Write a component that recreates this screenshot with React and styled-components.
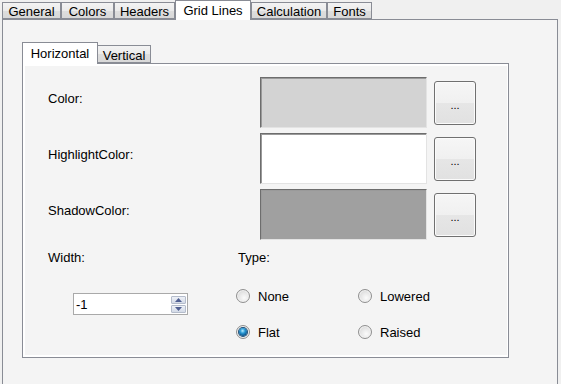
import React from 'react'
import styled, { createGlobalStyle } from 'styled-components'

const GlobalStyle = createGlobalStyle`
	html, body {
		margin: 0;
		padding: 0;
		background: #f0f0f0;
	}
	body {
		font: 13px 'Liberation Sans', Arial, sans-serif;
		color: #000;
	}
`

const Window = styled.div`
	width: 561px;
	height: 384px;
	overflow: hidden;
	padding-left: 2px;
	box-sizing: border-box;
`

const TabStrip = styled.div`
	display: flex;
	align-items: flex-end;
	height: ${p => p.$height}px;
`

const Tab = styled.div`
	position: relative;
	box-sizing: border-box;
	width: ${p => p.$width}px;
	height: ${p => (p.$active ? p.$tall : p.$short)}px;
	margin-bottom: ${p => (p.$active ? -1 : 0)}px;
	margin-left: ${p => p.$shift || 0}px;
	z-index: ${p => (p.$active ? 2 : 1)};
	border: 1px solid #898c95;
	border-bottom: ${p => (p.$active ? 'none' : '1px solid #898c95')};
	background: ${p =>
		p.$active
			? '#ffffff'
			: 'linear-gradient(#f3f3f3 0%, #ebebeb 50%, #dedede 51%, #d8d8d8 100%)'};
	display: flex;
	justify-content: center;
	align-items: center;
	padding-top: ${p => p.$pad || 0}px;
	line-height: 15px;
	white-space: nowrap;
`

const Page = styled.div`
	box-sizing: border-box;
	width: 556px;
	height: 380px;
	border: 1px solid #898c95;
	background: #f4f4f4;
	padding: 22px 0 0 19px;
`

const InnerTabs = styled.div`
	width: 487px;
`

const InnerPanel = styled.div`
	box-sizing: border-box;
	height: 295px;
	border: 1px solid #898c95;
	background: #ffffff;
	padding: 2px 1px 2px 2px;
`

const Content = styled.div`
	height: 100%;
	background: #f4f4f4;
	padding: 11px 0 0 23px;
	box-sizing: border-box;
`

const ColorRows = styled.div`
	display: flex;
	flex-direction: column;
	gap: 5px;
`

const ColorRow = styled.div`
	display: flex;
	align-items: flex-start;
	height: 51px;
`

const Label = styled.div`
	width: ${p => p.$width || 'auto'};
	margin-top: ${p => p.$top || 0}px;
	padding-left: ${p => p.$left || 0}px;
	line-height: 15px;
`

const Swatch = styled.div`
	box-sizing: border-box;
	width: 167px;
	height: 51px;
	background: ${p => p.$color};
	border: 1px solid;
	border-color: #6d6d6d #e3e3e3 #e3e3e3 #6d6d6d;
	box-shadow: inset 1px 1px 0 #9a9a9a;
`

const PickButton = styled.button`
	box-sizing: border-box;
	width: 42px;
	height: 44px;
	margin: 4px 0 0 7px;
	padding: 4px 0 0;
	border: 1px solid #707070;
	border-radius: 3px;
	background: linear-gradient(#f6f6f6 0%, #f0f0f0 50%, #e6e6e6 51%, #e1e1e1 100%);
	box-shadow: inset 0 0 0 1px #fbfbfb;
	font: 11px 'Liberation Sans', Arial, sans-serif;
	color: #000;
	letter-spacing: 0;
`

const Bottom = styled.div`
	display: grid;
	grid-template-columns: 188px 1fr;
	margin-top: 10px;
`

const SpinBox = styled.div`
	box-sizing: border-box;
	display: flex;
	align-items: center;
	justify-content: space-between;
	width: 115px;
	height: 22px;
	margin: 28px 0 0 25px;
	padding: 0 1px 0 2px;
	border: 1px solid #a9a9a9;
	background: #ffffff;
`

const SpinButtons = styled.div`
	display: flex;
	flex-direction: column;
	gap: 1px;
`

const SpinButton = styled.div`
	box-sizing: border-box;
	width: 15px;
	height: 8px;
	border: 1px solid #b4bccb;
	border-radius: 1px;
	background: linear-gradient(#eef1f7, #d3dae7);
	display: flex;
	align-items: center;
	justify-content: center;
`

const RadioGrid = styled.div`
	display: grid;
	grid-template-columns: 122px 1fr;
	grid-auto-rows: 20px;
	row-gap: 16px;
	margin-top: 21px;
`

const RadioItem = styled.label`
	display: flex;
	align-items: center;
	gap: 8px;
	line-height: 15px;
`

const RadioCircle = styled.span`
	position: relative;
	box-sizing: border-box;
	width: 14px;
	height: 14px;
	border-radius: 50%;
	border: 1px solid #8f8f8f;
	background: radial-gradient(circle at 60% 65%, #fbfbfb 0%, #e8e8e8 45%, #cfcfcf 100%);
	box-shadow: inset 0 0 0 1px #f2f2f2;
	display: flex;
	align-items: center;
	justify-content: center;

	&::after {
		content: '';
		display: ${p => (p.$checked ? 'block' : 'none')};
		width: 8px;
		height: 8px;
		border-radius: 50%;
		background: radial-gradient(circle at 45% 35%, #b8ecff 0%, #2a9ad6 35%, #0e5a92 70%, #08355a 100%);
		box-shadow: 0 0 0 1px #1d4f78;
	}
`

const Arrow = ({ down }) => (
	<svg width='7' height='4' viewBox='0 0 7 4'>
		<path d={down ? 'M0 0H7L3.5 4Z' : 'M0 4H7L3.5 0Z'} fill='#4f5f91' />
	</svg>
)

const Radio = ({ label, checked }) => (
	<RadioItem>
		<RadioCircle $checked={checked} />
		{label}
	</RadioItem>
)

const outerTabs = [
	{ name: 'General', width: 59 },
	{ name: 'Colors', width: 53 },
	{ name: 'Headers', width: 61 },
	{ name: 'Grid Lines', width: 76, active: true },
	{ name: 'Calculation', width: 76 },
	{ name: 'Fonts', width: 45 }
]

const colorRows = [
	{ name: 'Color:', color: '#d3d3d3' },
	{ name: 'HighlightColor:', color: '#ffffff' },
	{ name: 'ShadowColor:', color: '#a0a0a0' }
]

const App = () => (
	<>
		<GlobalStyle />
		<Window>
			<TabStrip $height={19}>
				{outerTabs.map(t => (
					<Tab
						key={t.name}
						$width={t.width}
						$active={t.active}
						$tall={20}
						$short={17}
						$pad={t.active ? 0 : 1}
					>
						{t.name}
					</Tab>
				))}
			</TabStrip>
			<Page>
				<InnerTabs>
					<TabStrip $height={21}>
						<Tab $width={76} $active $tall={22} $short={18}>
							Horizontal
						</Tab>
						<Tab $width={54} $tall={22} $short={18} $shift={-1} $pad={2}>
							Vertical
						</Tab>
					</TabStrip>
					<InnerPanel>
						<Content>
							<ColorRows>
								{colorRows.map(r => (
									<ColorRow key={r.name}>
										<Label $width='212px' $top={14}>
											{r.name}
										</Label>
										<Swatch $color={r.color} />
										<PickButton>...</PickButton>
									</ColorRow>
								))}
							</ColorRows>
							<Bottom>
								<div>
									<Label>Width:</Label>
									<SpinBox>
										<span>-1</span>
										<SpinButtons>
											<SpinButton>
												<Arrow />
											</SpinButton>
											<SpinButton>
												<Arrow down />
											</SpinButton>
										</SpinButtons>
									</SpinBox>
								</div>
								<div>
									<Label $left={2}>Type:</Label>
									<RadioGrid>
										<Radio label='None' />
										<Radio label='Lowered' />
										<Radio label='Flat' checked />
										<Radio label='Raised' />
									</RadioGrid>
								</div>
							</Bottom>
						</Content>
					</InnerPanel>
				</InnerTabs>
			</Page>
		</Window>
	</>
)

export default App
